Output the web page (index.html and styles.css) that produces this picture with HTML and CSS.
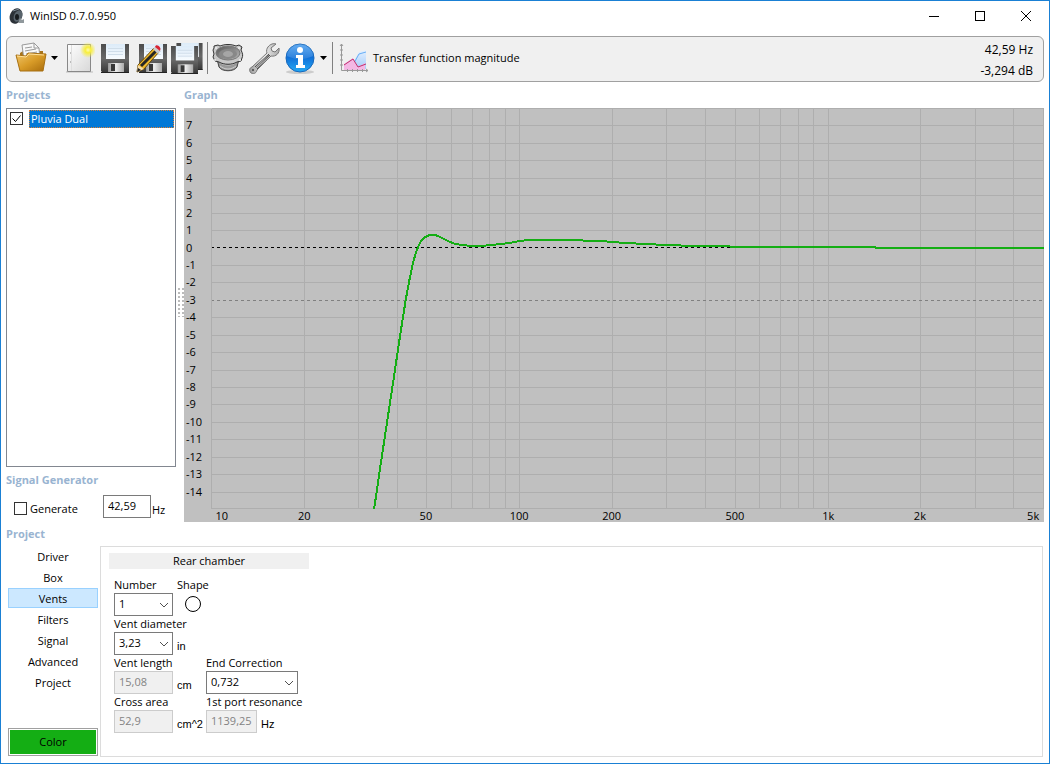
FILE: index.html
```html
<!DOCTYPE html>
<html lang="en">
<head>
<meta charset="utf-8">
<title>WinISD 0.7.0.950</title>
<meta name="viewport" content="width=device-width, initial-scale=1">
<link rel="stylesheet" href="styles.css">
</head>
<body>
<svg class="defs" aria-hidden="true">
  <defs>
    <linearGradient id="gold" x1="0" y1="0" x2="1" y2="1"><stop offset="0" stop-color="#f0c66c"/><stop offset=".5" stop-color="#d99c28"/><stop offset="1" stop-color="#a86c0c"/></linearGradient>
    <linearGradient id="paper" x1="0" y1="0" x2="1" y2="1"><stop offset="0" stop-color="#ffffff"/><stop offset="1" stop-color="#d8d8d8"/></linearGradient>
    <radialGradient id="glow"><stop offset="0" stop-color="#fffcae"/><stop offset=".35" stop-color="#f8ee3c"/><stop offset="1" stop-color="#f8ee3c" stop-opacity="0"/></radialGradient>
    <linearGradient id="dark" x1="0" y1="0" x2="0" y2="1"><stop offset="0" stop-color="#4c4c4c"/><stop offset=".5" stop-color="#686868"/><stop offset="1" stop-color="#363636"/></linearGradient>
    <linearGradient id="steel" x1="0" y1="0" x2="1" y2="0"><stop offset="0" stop-color="#999"/><stop offset=".5" stop-color="#eee"/><stop offset="1" stop-color="#aaa"/></linearGradient>
    <linearGradient id="sheet" x1="0" y1="0" x2="0" y2="1"><stop offset="0" stop-color="#dcebf8"/><stop offset="1" stop-color="#f8fcff"/></linearGradient>
    <linearGradient id="cone" x1="0" y1="0" x2="1" y2="1"><stop offset="0" stop-color="#555"/><stop offset="1" stop-color="#bbb"/></linearGradient>
    <linearGradient id="blue" x1="0" y1="0" x2="0" y2="1"><stop offset="0" stop-color="#4a9ff0"/><stop offset=".48" stop-color="#1070d8"/><stop offset="1" stop-color="#24aaf4"/></linearGradient>
    <linearGradient id="sky" x1="0" y1="0" x2="0" y2="1"><stop offset="0" stop-color="#e4f0ff"/><stop offset="1" stop-color="#a4ccfa"/></linearGradient>
    <symbol id="disk" viewBox="0 0 28 30">
      <path d="M0 1h28v29H2l-2-2z" fill="url(#dark)"/>
      <path d="M5 1h19v15H5z" fill="url(#sheet)"/>
      <path d="M7 5.500h15M7 8.500h15M7 11.500h15" stroke="#d0deea"/>
      <path d="M7 20h16v9H7z" fill="url(#steel)"/>
      <path d="M10 21h4v7h-4z" fill="#383838"/>
      <path d="M0 29.500h28" stroke="#222"/>
    </symbol>
  </defs>
</svg>
<div class="window">
  <header class="titlebar">
    <svg class="app-icon" viewBox="0 0 16 16" aria-hidden="true"><ellipse cx="7" cy="8" rx="6" ry="8" transform="rotate(24 7 8)" fill="#2c3238"/><ellipse cx="9" cy="8" rx="4" ry="6" transform="rotate(26 9 8)" fill="#59646c"/><ellipse cx="8" cy="9" rx="2" ry="3" fill="#171b1e"/><path d="M9 15l2-5 2 2 2-1v4z" fill="#90989c"/><path d="M4 3l6-2" stroke="#7b8994"/></svg>
    <h1 class="title">WinISD 0.7.0.950</h1>
    <div class="window-controls">
      <button class="window-button" aria-label="Minimize"><svg viewBox="0 0 12 12"><path d="M1 6.500h10"/></svg></button>
      <button class="window-button" aria-label="Maximize"><svg viewBox="0 0 12 12"><path d="M1.500 1.500h9v9h-9z"/></svg></button>
      <button class="window-button" aria-label="Close"><svg viewBox="0 0 12 12"><path d="M1 1l10 10M11 1L1 11" shape-rendering="auto"/></svg></button>
    </div>
  </header>

  <div class="toolbar" role="toolbar" aria-label="Main">
    <button class="tool" aria-label="Open"><svg viewBox="0 0 32 32">
      <path d="M5 11l3-2h20v16H5z" fill="#a8741a"/>
      <path d="M7 3l12-2 5 5 1 12H9z" fill="#f8f8f8" stroke="#999"/>
      <path d="M19 1v5h5M10 6l7-1M10 9l11-2M11 12l11-2M11 15l11-2" fill="none" stroke="#9a9a9a"/>
      <path d="M1 13l10 1 2-3 18 1-3 17H5z" fill="url(#gold)" stroke="#a87012"/>
      <path d="M2 14l9 1 3-3 15 1" fill="none" stroke="#ffe09a"/>
    </svg></button>
    <button class="drop" aria-label="Recent projects"><svg viewBox="0 0 8 4"><path d="M0 0h7L3.500 4z"/></svg></button>
    <button class="tool" aria-label="New"><svg viewBox="0 0 32 32">
      <path d="M3 30h27" stroke="#bbb"/><path d="M4.500 2.500h23v27h-23z" fill="url(#paper)" stroke="#888"/>
      <path d="M7 11h1M7 20h1" stroke="#888"/><path d="M8.500 3v26" stroke="#dedede"/><circle cx="25" cy="8" r="8" fill="url(#glow)"/>
    </svg></button>
    <button class="tool" aria-label="Save"><svg viewBox="0 0 32 32"><use href="#disk" x="2" y="1" width="28" height="30"/></svg></button>
    <button class="tool" aria-label="Save as"><svg viewBox="0 0 32 32">
      <use href="#disk" x="4" y="1" width="28" height="30"/>
      <path d="M3 23L19 6l5 4L9 27l-7 3z" fill="#eeb82c" stroke="#6b4a08"/>
      <path d="M6 24L22 8" stroke="#262626" stroke-width="3"/>
      <path d="M3 23l6 4-7 3z" fill="#f4dcac"/><path d="M2 30l1-4 3 2z" fill="#222"/>
      <path d="M18 7l2-2 5 4-2 3z" fill="#ccc"/><path d="M20 5c1-4 7 0 5 4z" fill="#d92332"/>
    </svg></button>
    <button class="tool" aria-label="Save all"><svg viewBox="0 0 32 32">
      <use href="#disk" x="5" y="0" width="27" height="28"/><use href="#disk" x="0" y="3" width="27" height="29"/>
    </svg></button>
    <span class="separator"></span>
    <button class="tool" aria-label="Driver editor"><svg viewBox="0 0 32 32">
      <path d="M5 17l2 8c3 5 15 5 18 0l2-8z" fill="#999" stroke="#444"/>
      <path d="M7 20c5 4 13 4 18 0M8 24c5 4 11 4 16 0" fill="none" stroke="#ccc"/>
      <path d="M2 4l4-1 2 1c5-2 11-2 16 0l3-1 3 2-1 3c2 4 2 6 1 8l-1 3-4 1c-5 3-13 3-18 0l-4-1-2-4 1-3-1-4 1-2z" fill="#c8c8c8" stroke="#333"/>
      <ellipse cx="16" cy="11" rx="12" ry="7" fill="url(#cone)" stroke="#777"/>
      <ellipse cx="16" cy="12" rx="9" ry="5" fill="#888"/><ellipse cx="16" cy="12" rx="5" ry="3" fill="#a6a6a6"/>
      <g fill="#eee"><circle cx="4" cy="6" r="1"/><circle cx="27" cy="6" r="1"/><circle cx="3" cy="18" r="1"/><circle cx="28" cy="18" r="1"/></g>
    </svg></button>
    <button class="tool" aria-label="Options"><svg viewBox="0 0 32 32">
      <path d="M20 5c2-3 6-4 8-3l-5 4 1 3 3 1 4-4c1 5-3 9-8 8L9 28c-1 4-4 4-6 3-2-2-2-5 1-6l15-14c-1-2 0-5 1-6z" fill="url(#steel)" stroke="#777"/>
      <path d="M7 25l14-13M9 27l13-14" stroke="#4c4c4c"/><path d="M8 26l13-13" stroke="#888" stroke-width="1"/><circle cx="5" cy="28" r="1" fill="#444"/>
    </svg></button>
    <button class="tool" aria-label="Information"><svg viewBox="0 0 32 32">
      <ellipse cx="16" cy="30" rx="14" ry="2" fill="#ccc"/><circle cx="16" cy="16" r="14" fill="url(#blue)" stroke="#1768bc"/>
      <path d="M3 14a13 12 0 0 1 26 0c-8 4-18 4-26 0z" fill="#fff" opacity=".14"/>
      <circle cx="16" cy="8" r="3" fill="#fff"/><path d="M12 13h7v10h2v3h-9v-3h2v-7h-2z" fill="#fff"/>
    </svg></button>
    <button class="drop" aria-label="More information"><svg viewBox="0 0 8 4"><path d="M0 0h7L3.500 4z"/></svg></button>
    <span class="separator"></span>
    <button class="mode"><svg viewBox="0 0 32 32" aria-hidden="true">
      <path d="M8 26l9-7 5-9 7-2v19H8z" fill="url(#sky)"/><path d="M17 21l5-9 7-2" fill="none" stroke="#69aef4"/>
      <path d="M7 22l9-6 5 9 7-4v7H7z" fill="#f4b7e4"/><path d="M7 23l9-6 5 8 8-3" fill="none" stroke="#c0306e"/>
      <path d="M4.500 2v26.500H31M3 8h3M3 13h3M3 18h3M3 23h3M10.500 27v3M15.500 27v3M20.500 27v3M25.500 27v3M3 4l1.500-2L6 4M29 27l2 1.500-2 1.500" fill="none" stroke="#999"/>
    </svg><span>Transfer function magnitude</span></button>
    <div class="readout"><output>42,59 Hz</output><output>-3,294 dB</output></div>
  </div>

  <main class="workspace">
    <section class="sidebar">
      <h2 class="heading">Projects</h2>
      <ul class="project-list">
        <li class="project-item">
          <span class="check"><input type="checkbox" id="pluvia" checked><svg viewBox="0 0 13 13" aria-hidden="true"><path d="M2.500 6.500l3 3 5-6"/></svg></span>
          <label class="project-name" for="pluvia">Pluvia Dual</label>
        </li>
      </ul>
      <h2 class="heading">Signal Generator</h2>
      <div class="generator">
        <label class="generate"><input type="checkbox">Generate</label>
        <input class="field frequency" type="text" value="42,59" aria-label="Frequency">
        <span class="frequency-unit">Hz</span>
      </div>
    </section>
    <div class="splitter" role="separator"><span class="grip"></span></div>
    <section class="graph">
      <h2 class="heading">Graph</h2>
      <div class="chart">
        <div class="levels">
          <span>7</span><span>6</span><span>5</span><span>4</span><span>3</span><span>2</span><span>1</span><span>0</span><span>-1</span><span>-2</span><span>-3</span><span>-4</span><span>-5</span><span>-6</span><span>-7</span><span>-8</span><span>-9</span><span>-10</span><span>-11</span><span>-12</span><span>-13</span><span>-14</span>
        </div>
        <svg class="plot" viewBox="0 0 833 401" preserveAspectRatio="none" role="img" aria-label="Transfer function magnitude">
          <g transform="translate(.5 .5)">
            <path class="grid" d="M0 0H832M0 17H832M0 35H832M0 52H832M0 70H832M0 87H832M0 105H832M0 122H832M0 157H832M0 174H832M0 209H832M0 227H832M0 244H832M0 262H832M0 279H832M0 296H832M0 314H832M0 331H832M0 349H832M0 366H832M0 384H832M0 400H832M0 0V400M93 0V400M147 0V400M186 0V400M215 0V400M240 0V400M261 0V400M278 0V400M294 0V400M308 0V400M401 0V400M455 0V400M494 0V400M524 0V400M548 0V400M569 0V400M587 0V400M602 0V400M617 0V400M709 0V400M764 0V400M802 0V400M832 0V400"/>
            <path class="zero" d="M.5 139H832"/>
            <path class="cutoff" d="M.5 192H832"/>
          </g>
          <polyline class="curve" points="163,401 165.700,384 168.200,366 170.800,349 173.500,331 176.100,314 178.800,296 181.400,279 184,262 186.600,244 189.200,227 192,209 194.700,192 198,174 201.500,157 204.500,146 207,139 210,133 213,130 216,128 219,127 224,127 227,128 231,130 237,133 244,136 252,137 260,138 270,138 280,137 290,136 299,135 308,133 318,132 328,132 356,132 366,132 377,133 391,133 401,134 415,135 435,136 455,137 484,138 514,138 524,139 664,139 665,140 833,140"/>
        </svg>
        <div class="frequencies">
          <span style="left:1.300%">10</span><span style="left:11.200%">20</span><span style="left:25.800%">50</span><span style="left:37%">100</span><span style="left:48.100%">200</span><span style="left:62.900%">500</span><span style="left:74.100%">1k</span><span style="left:85.100%">2k</span><span style="left:98.700%">5k</span>
        </div>
      </div>
    </section>
  </main>

  <section class="project">
    <h2 class="heading project-heading">Project</h2>
    <nav class="tabs" aria-label="Project pages">
      <button class="tab">Driver</button>
      <button class="tab">Box</button>
      <button class="tab tab-active">Vents</button>
      <button class="tab">Filters</button>
      <button class="tab">Signal</button>
      <button class="tab">Advanced</button>
      <button class="tab">Project</button>
      <button class="color">Color</button>
    </nav>
    <div class="panel">
      <h3 class="chamber">Rear chamber</h3>
      <form class="vents">
        <label class="caption" for="number">Number</label>
        <span class="caption second">Shape</span>
        <span class="combo first"><select class="field" id="number"><option>1</option></select><svg viewBox="0 0 10 6" aria-hidden="true"><path d="M1 1l4 4 4-4"/></svg></span>
        <button class="shape second" type="button" aria-label="Round vent"><svg viewBox="0 0 18 18"><circle cx="9" cy="9" r="7.500"/></svg></button>

        <label class="caption" for="diameter">Vent diameter</label>
        <span class="combo first"><select class="field" id="diameter"><option>3,23</option></select><svg viewBox="0 0 10 6" aria-hidden="true"><path d="M1 1l4 4 4-4"/></svg></span>
        <span class="unit second">in</span>

        <label class="caption" for="length">Vent length</label>
        <label class="caption third" for="correction">End Correction</label>
        <input class="field first" id="length" type="text" value="15,08" disabled>
        <span class="unit second">cm</span>
        <span class="combo third"><select class="field" id="correction"><option>0,732</option></select><svg viewBox="0 0 10 6" aria-hidden="true"><path d="M1 1l4 4 4-4"/></svg></span>

        <label class="caption" for="area">Cross area</label>
        <label class="caption third" for="resonance">1st port resonance</label>
        <input class="field first" id="area" type="text" value="52,9" disabled>
        <span class="unit second">cm^2</span>
        <span class="resonance third"><input class="field" id="resonance" type="text" value="1139,25" disabled><span class="unit">Hz</span></span>
      </form>
    </div>
  </section>
</div>
</body>
</html>
```
FILE: styles.css
```css
* { box-sizing: border-box; }

body {
  margin: 0;
  background: #fff;
  color: #000;
  font: 11px/16px "Open Sans", "Noto Sans", sans-serif;
}

h1, h2, h3, ul { margin: 0; padding: 0; font: inherit; list-style: none; }

button, input, select { font: inherit; color: inherit; margin: 0; }

button { padding: 0; border: 0; background: none; }

svg { display: block; }

.defs { position: absolute; width: 0; height: 0; }

.window {
  display: flex;
  flex-direction: column;
  min-height: 100vh;
  padding: 0 5px 6px;
  border: 1px solid #1a80d4;
}

.titlebar { display: flex; align-items: center; gap: 5px; height: 35px; padding: 0 0 6px 3px; }
.app-icon { width: 16px; height: 16px; }
.title { flex: 1; }
.window-controls { display: flex; margin-right: -5px; }
.window-button { display: grid; place-items: center; width: 46px; height: 30px; }
.window-button svg { width: 12px; height: 12px; fill: none; stroke: #000; shape-rendering: crispEdges; }

.toolbar {
  display: flex;
  align-items: center;
  gap: 4px;
  height: 46px;
  padding: 0 10px 2px 8px;
  border: 1px solid #a0a0a0;
  border-radius: 6px;
  background: #f0f0f0;
}
.tool, .tool svg, .mode svg { width: 32px; height: 32px; }
.drop { display: grid; align-items: center; width: 8px; height: 32px; }
.drop svg { width: 8px; height: 4px; }
.separator { width: 1px; height: 32px; background: #808080; }
.mode { display: flex; align-items: center; gap: 4px; white-space: nowrap; }
.readout {
  display: flex;
  flex-direction: column;
  margin-left: auto;
  padding-top: 4px;
  font-size: 12px;
  line-height: 21px;
  text-align: right;
}

.workspace { display: flex; flex: 1; min-height: 300px; }
.heading { height: 26px; line-height: 26px; font-weight: 700; color: #99b4d1; }
.sidebar { display: flex; flex-direction: column; width: 170px; }
.project-list { flex: 1; padding: 1px; border: 1px solid #828790; }
.project-item { display: flex; align-items: center; gap: 6px; padding-left: 2px; }
.project-name {
  flex: 1;
  height: 18px;
  padding-left: 1px;
  border: 1px dotted #e08030;
  background: #0078d7;
  color: #fff;
}

.check { display: grid; margin-bottom: 2px; }
.check > * { grid-area: 1 / 1; }
.check svg { width: 13px; height: 13px; fill: none; stroke: #000; pointer-events: none; }
.check input:not(:checked) + svg { visibility: hidden; }
input[type="checkbox"] { width: 13px; height: 13px; border: 1px solid #333; background: #fff; appearance: none; }

.generator { display: flex; height: 29px; padding: 2px 0 0 8px; }
.generate { display: flex; align-items: center; gap: 3px; width: 89px; }
.frequency-unit { padding: 7px 0 0 1px; }

.field {
  width: 100%;
  height: 23px;
  padding: 0 4px 2px;
  border: 1px solid #7a7a7a;
  border-radius: 0;
  background: #fff;
  appearance: none;
}
.field:disabled { border-color: #ccc; background: #f0f0f0; color: #838383; opacity: 1; }
.frequency { width: 48px; }

.splitter { display: grid; align-items: center; justify-items: end; width: 8px; }
.grip {
  width: 7px;
  height: 30px;
  background: radial-gradient(circle, #bbb 1px, transparent 1px) 0 0 / 4px 4px;
}

.graph { display: flex; flex: 1; flex-direction: column; min-width: 0; }
.chart {
  display: grid;
  flex: 1;
  grid-template: minmax(0, 1fr) 13px / 27px minmax(0, 1fr);
  background: #c0c0c0;
}
.levels { display: flex; flex-direction: column; padding-left: 2px; }
.levels::before, .levels::after { flex: .5; content: ""; }
.levels span { display: flex; flex: 1; align-items: center; min-height: 0; }
.plot { width: 100%; height: 100%; min-height: 0; shape-rendering: crispEdges; }
.plot path, .plot polyline { fill: none; vector-effect: non-scaling-stroke; }
.grid { stroke: #aeaeae; }
.zero { stroke: #000; stroke-dasharray: 3 3; stroke-dashoffset: 1; }
.cutoff { stroke: #808080; stroke-dasharray: 3 3; stroke-dashoffset: 1; }
.curve { stroke: #14ae14; stroke-width: 2; }
.frequencies { position: relative; grid-column: 2; line-height: 14px; }
.frequencies span { position: absolute; transform: translateX(-50%); }

.project { display: grid; grid-template-columns: 94px 1fr; }
.project-heading { grid-column: 1 / -1; height: 24px; line-height: 24px; }
.tabs { display: flex; flex-direction: column; gap: 1px; padding: 0 2px 1px; }
.tab { height: 20px; padding-top: 1px; border: 1px solid transparent; line-height: 17px; }
.tab-active { border-color: #99d1ff; background: #cce8ff; }
.color {
  height: 28px;
  margin-top: auto;
  border: 1px solid #a0a0a0;
  background: #14ae14;
  box-shadow: inset 0 0 0 1px #fff;
}

.panel { min-height: 211px; margin-right: 1px; padding: 6px 8px; border: 1px solid #dcdcdc; }
.chamber { width: 200px; height: 16px; background: #f0f0f0; text-align: center; }
.vents {
  display: grid;
  grid-template-columns: 59px 25px 92px;
  grid-auto-rows: 16px 23px;
  column-gap: 4px;
  padding: 8px 5px 0;
  white-space: nowrap;
}
.caption, .first { grid-column: 1; }
.caption { width: 0; }
.second { grid-column: 2; }
.third { grid-column: 3; }
.combo { display: grid; align-items: center; }
.combo > * { grid-area: 1 / 1; }
.combo svg { justify-self: end; width: 10px; height: 6px; margin-right: 4px; fill: none; stroke: #505050; pointer-events: none; }
.shape { width: 18px; height: 18px; margin: 2px 0 0 7px; }
.shape svg { width: 18px; height: 18px; fill: none; stroke: #000; }
.unit { align-self: end; padding-bottom: 1px; font-family: "Liberation Sans", sans-serif; }
.resonance { display: flex; gap: 4px; }
.resonance .field { width: 51px; }
```
